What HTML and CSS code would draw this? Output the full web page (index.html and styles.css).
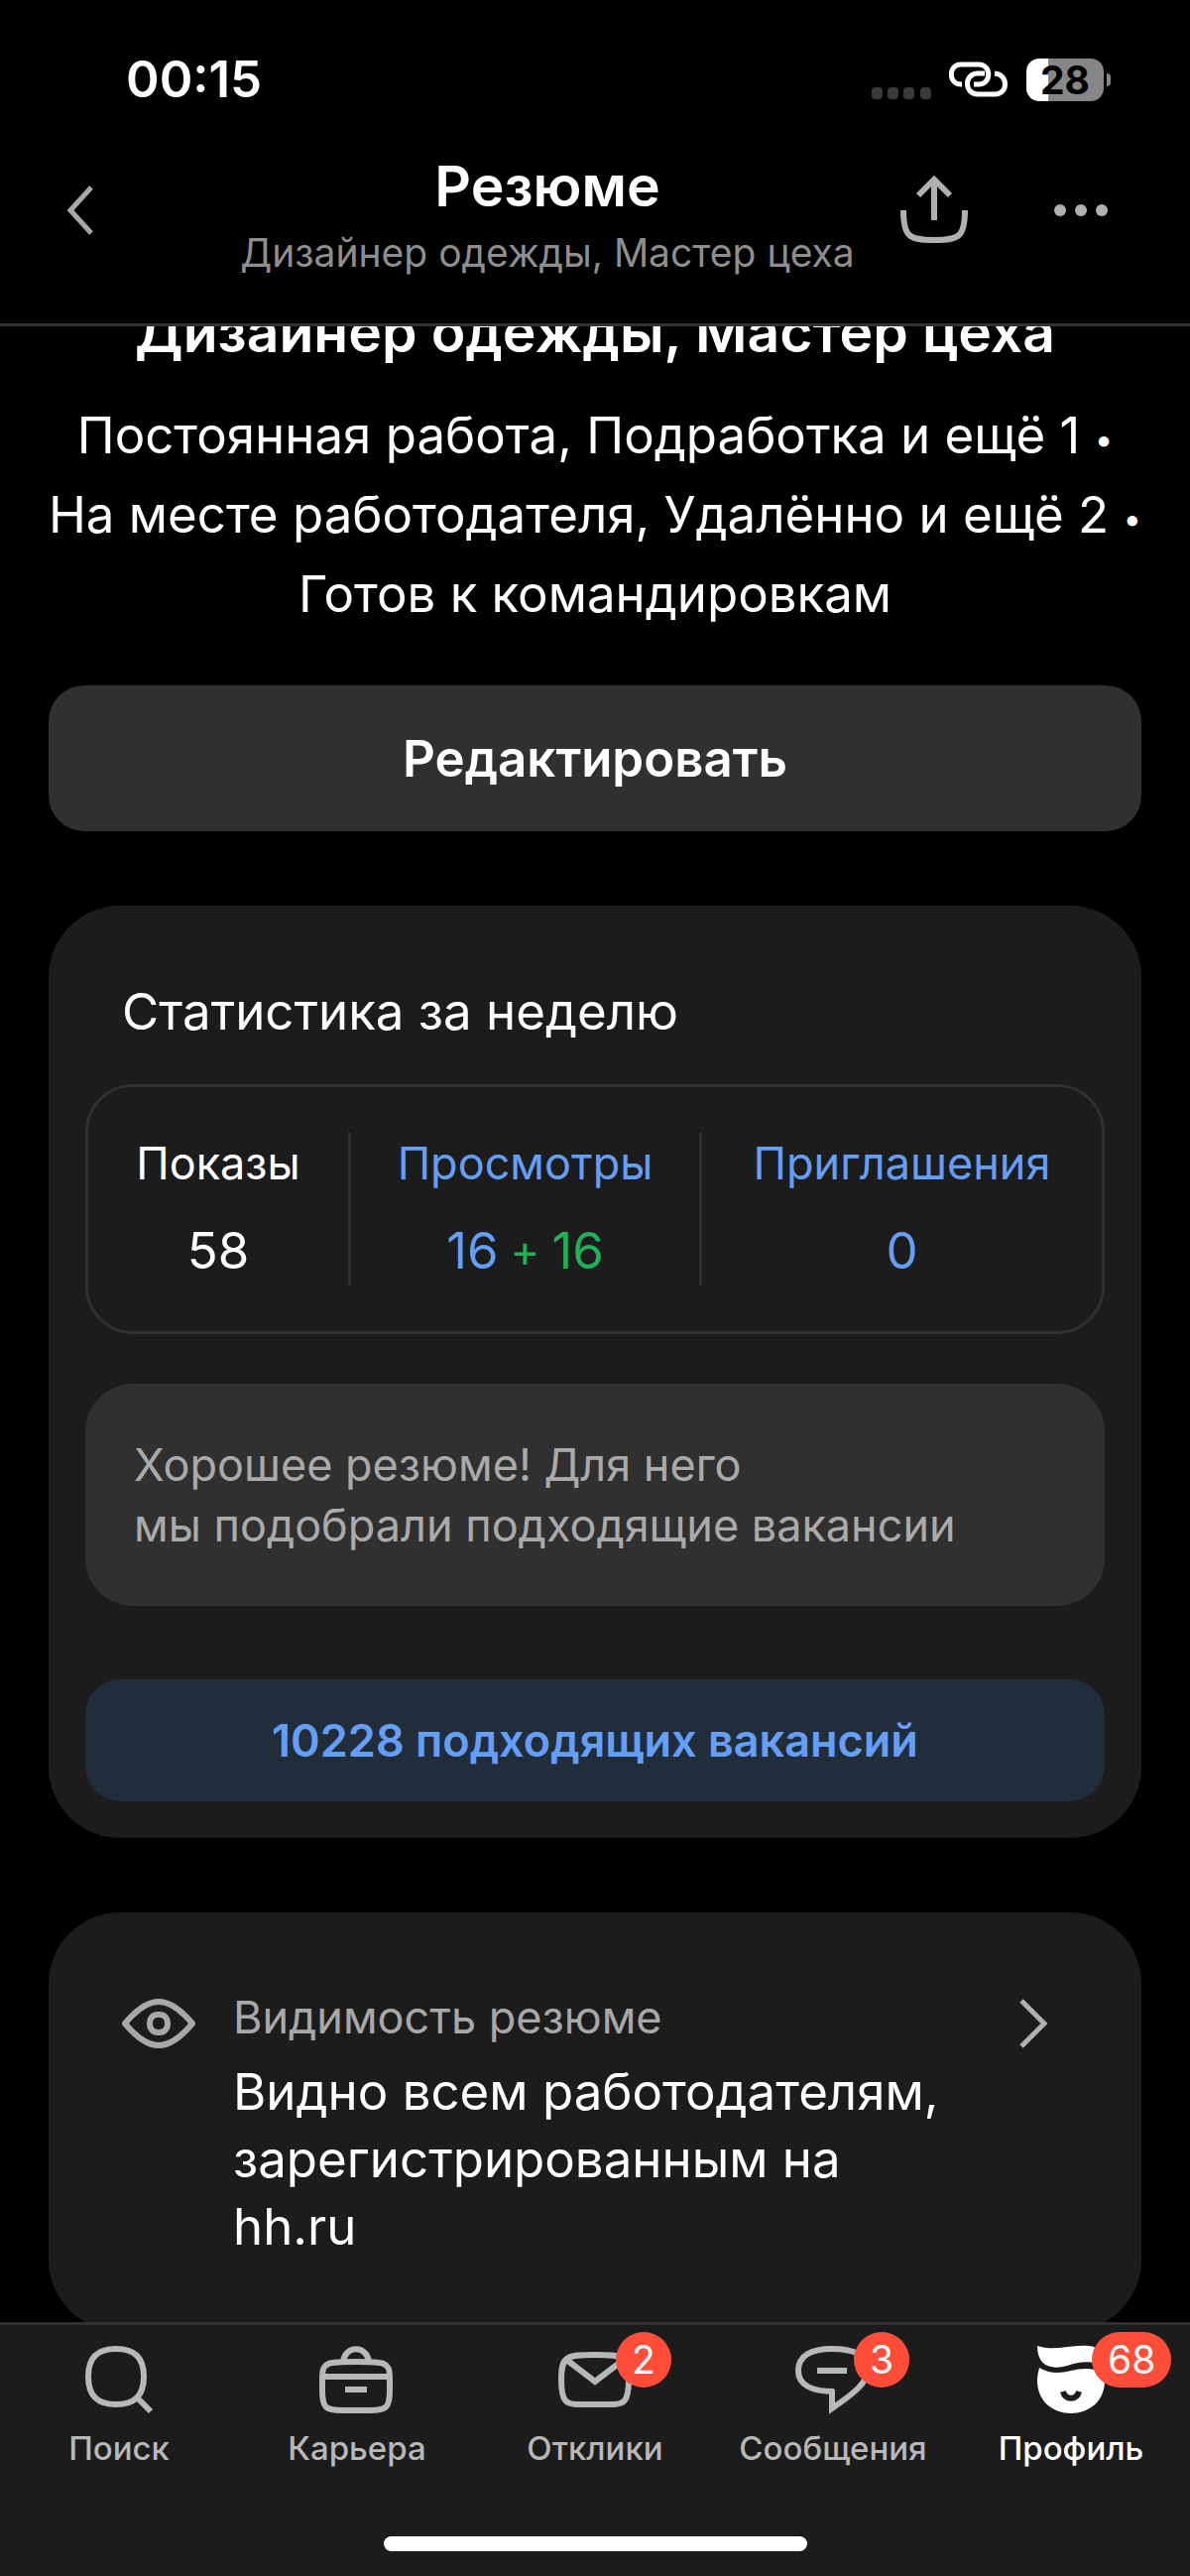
FILE: index.html
```html
<!DOCTYPE html>
<html lang="ru">
<head>
  <meta charset="UTF-8">
  <meta name="viewport" content="width=device-width, initial-scale=1">
  <title>Резюме</title>
  <link rel="stylesheet" href="styles.css">
</head>
<body>

<header class="header">
  <div class="status-bar">
    <span class="time">00:15</span>
    <div class="status-icons">
      <svg class="signal" width="60" height="12" viewBox="0 0 60 12" fill="#3a3a3a">
        <rect x="0" y="0" width="11" height="12" rx="4"/>
        <rect x="16" y="0" width="11" height="12" rx="4"/>
        <rect x="32" y="0" width="11" height="12" rx="4"/>
        <rect x="49" y="0" width="11" height="12" rx="4"/>
      </svg>
      <svg width="60" height="38" viewBox="0 0 60 38" fill="none" stroke="#fff" stroke-width="5">
        <path d="M13 24H12C-1 24-1 4 12 4H30C43 4 43 24 30 24H25"/>
        <path d="M36 13H29C15 13 15 34 29 34H46C60 34 60 14 46 13"/>
      </svg>
      <div class="battery"><span>28</span></div>
    </div>
  </div>
  <nav class="nav">
    <button class="icon-button back" aria-label="Назад">
      <svg width="28" height="52" viewBox="0 0 28 52" fill="none" stroke="#a8a8a8" stroke-width="5">
        <path d="M25 3L4 26L25 49"/>
      </svg>
    </button>
    <div class="nav-text">
      <h1>Резюме</h1>
      <p>Дизайнер одежды, Мастер цеха</p>
    </div>
    <div class="nav-actions">
      <button class="icon-button" aria-label="Поделиться">
        <svg width="72" height="72" viewBox="0 0 72 72" fill="none" stroke="#b0b0b0" stroke-width="6">
          <path d="M36 6V46M20 21L36 5L52 21"/>
          <path d="M5 36C5 62 10 66 36 66S67 62 67 36"/>
        </svg>
      </button>
      <button class="icon-button" aria-label="Ещё">
        <svg width="56" height="14" viewBox="0 0 56 14" fill="#b0b0b0">
          <circle cx="7" cy="7" r="6"/>
          <circle cx="28" cy="7" r="6"/>
          <circle cx="49" cy="7" r="6"/>
        </svg>
      </button>
    </div>
  </nav>
</header>

<main class="content">
  <div class="scroll">
    <h2 class="resume-title">Дизайнер одежды, Мастер цеха</h2>
    <p class="resume-info">Постоянная работа, Подработка и ещё 1 <span class="dot">•</span><br>На месте работодателя, Удалённо и ещё 2 <span class="dot">•</span><br>Готов к командировкам</p>
    <button class="edit-button">Редактировать</button>

    <section class="card">
      <h3>Статистика за неделю</h3>
      <div class="stats">
        <div class="stat">
          <span class="stat-label">Показы</span>
          <span class="stat-value">58</span>
        </div>
        <a class="stat" href="#">
          <span class="stat-label">Просмотры</span>
          <span class="stat-value">16<span class="plus">+</span><span class="new">16</span></span>
        </a>
        <a class="stat" href="#">
          <span class="stat-label">Приглашения</span>
          <span class="stat-value">0</span>
        </a>
      </div>
      <p class="notice">Хорошее резюме! Для него<br>мы подобрали подходящие вакансии</p>
      <button class="vacancies-button">10228 подходящих вакансий</button>
    </section>

    <a class="card visibility" href="#">
      <svg width="74" height="74" viewBox="0 0 74 74" fill="none" stroke="#a8a8a8" stroke-width="6">
        <path d="M3 37C13 25 24 15 37 15S61 25 71 37C61 49 50 59 37 59S13 49 3 37Z" stroke-linejoin="round"/>
        <rect x="28" y="28" width="18" height="18" rx="8"/>
      </svg>
      <div class="visibility-text">
        <p class="caption">Видимость резюме</p>
        <p class="value">Видно всем работодателям, зарегистрированным на hh.ru</p>
      </div>
      <svg width="74" height="74" viewBox="0 0 74 74" fill="none" stroke="#b0b0b0" stroke-width="5">
        <path d="M27 14L50 37L27 60"/>
      </svg>
    </a>
  </div>
</main>

<footer class="tab-bar">
  <nav class="tabs">
    <a class="tab" href="#">
      <span class="tab-icon">
        <svg width="80" height="80" viewBox="0 0 80 80" fill="none" stroke="#b8b8b8" stroke-width="6">
          <path d="M37 9C56 9 65 18 65 37S56 65 37 65S9 56 9 37S18 9 37 9Z"/>
          <path d="M57 57L72 72"/>
        </svg>
      </span>
      Поиск
    </a>
    <a class="tab" href="#">
      <span class="tab-icon">
        <svg width="80" height="80" viewBox="0 0 80 80" fill="none" stroke="#b8b8b8" stroke-width="6">
          <path d="M39 22C67 22 73 22 73 37V51C73 69 69 71 53 71H25C9 71 5 69 5 51V37C5 22 11 22 39 22Z"/>
          <path d="M26 22C28 5 50 5 52 22M5 37H73M28 50H50"/>
        </svg>
      </span>
      Карьера
    </a>
    <a class="tab" href="#">
      <span class="tab-icon">
        <svg width="80" height="80" viewBox="0 0 80 80" fill="none" stroke="#b8b8b8" stroke-width="6">
          <path d="M40 15C69 15 74 16 74 40S68 65 56 65H24C12 65 6 64 6 40S11 15 40 15Z"/>
          <path d="M10 19L40 42L70 19"/>
        </svg>
        <span class="badge">2</span>
      </span>
      Отклики
    </a>
    <a class="tab" href="#">
      <span class="tab-icon">
        <svg width="80" height="80" viewBox="0 0 80 80" fill="none" stroke="#b8b8b8" stroke-width="6">
          <path d="M41 52C18 52 5 45 5 31C5 16 18 9 39 9S75 15 75 30C75 43 61 54 39 69V50"/>
          <path d="M24 31H54"/>
        </svg>
        <span class="badge">3</span>
      </span>
      Сообщения
    </a>
    <a class="tab active" href="#">
      <span class="tab-icon">
        <svg width="80" height="80" viewBox="0 0 80 80" fill="#fff">
          <path d="M6 6C24 12 40 4 58 6C68 7 73 13 74 26C60 20 48 22 36 26C18 31 6 25 6 6Z"/>
          <path d="M8 28C18 34 28 34 40 31C52 28 62 28 73 33C74 36 74 38 74 41C74 62 58 74 40 74S6 62 6 41C6 36 7 32 8 28Z"/>
          <path d="M32 52C34 61 46 61 48 52" fill="none" stroke="#1c1c1c" stroke-width="6"/>
        </svg>
        <span class="badge">68</span>
      </span>
      Профиль
    </a>
  </nav>
  <div class="home-indicator"></div>
</footer>

</body>
</html>
```
FILE: styles.css
```css
* {
  box-sizing: border-box;
  margin: 0;
  padding: 0;
}
body {
  display: flex;
  flex-direction: column;
  height: 100vh;
  background: #000;
  color: #fff;
  font-family: Inter, "Liberation Sans", sans-serif;
  font-size: 51px;
}
a {
  color: inherit;
  text-decoration: none;
}
button {
  border: none;
  font-family: inherit;
  cursor: pointer;
}
svg {
  display: block;
  flex-shrink: 0;
}

/* Header */
.header {
  flex-shrink: 0;
  border-bottom: 3px solid #303030;
}
.status-bar {
  display: flex;
  justify-content: space-between;
  padding: 50px 80px 0 127px;
}
.time {
  font-weight: 600;
  line-height: 60px;
}
.status-icons {
  display: flex;
  align-items: center;
  gap: 18px;
}
.signal {
  align-self: flex-end;
  margin-bottom: 10px;
}
.battery {
  position: relative;
  width: 78px;
  height: 43px;
  margin-right: 7px;
  border-radius: 13px;
  background: linear-gradient(to right, #fff 28%, #868686 28%);
  color: #000;
  font-size: 39px;
  font-weight: 700;
  line-height: 43px;
  text-align: center;
}
.battery::after {
  content: "";
  position: absolute;
  top: 15px;
  right: -7px;
  width: 4px;
  height: 13px;
  border-radius: 0 4px 4px 0;
  background: #868686;
}
.nav {
  display: grid;
  grid-template-columns: 230px 1fr 326px;
  align-items: start;
  padding: 42px 0 43px;
}
.nav-text {
  text-align: center;
  white-space: nowrap;
}
.nav-text h1 {
  font-size: 57px;
  font-weight: 600;
  line-height: 72px;
}
.nav-text p {
  margin-top: 3px;
  color: #8e8e8e;
  font-size: 39px;
  line-height: 56px;
}
.icon-button {
  display: flex;
  align-items: center;
  height: 120px;
  background: none;
}
.back {
  padding-left: 67px;
}
.nav-actions {
  display: flex;
  justify-content: space-between;
  padding: 0 82px 0 32px;
}

/* Resume */
.content {
  flex: 1;
  min-height: 0;
  overflow: hidden;
}
.scroll {
  margin-top: -30px;
  padding: 0 49px;
}
.resume-title {
  font-size: 57px;
  font-weight: 600;
  line-height: 72px;
  text-align: center;
  white-space: nowrap;
}
.resume-info {
  margin: 28px -20px 52px;
  line-height: 80px;
  text-align: center;
}
.dot {
  font-size: 33px;
  line-height: 1;
  vertical-align: middle;
}
.edit-button {
  display: block;
  width: 100%;
  height: 147px;
  border-radius: 36px;
  background: #303030;
  color: #fff;
  font-size: 51px;
  font-weight: 600;
}
.card {
  display: block;
  margin-top: 75px;
  padding: 73px 37px 37px;
  border-radius: 72px;
  background: #1c1c1c;
}
.card h3 {
  padding: 0 37px;
  font-size: 51px;
  font-weight: 400;
  line-height: 68px;
}
.stats {
  display: grid;
  grid-template-columns: 262fr 354fr 406fr;
  margin-top: 39px;
  padding: 46px 0;
  border: 3px solid #303030;
  border-radius: 48px;
}
.stat {
  text-align: center;
}
.stat + .stat {
  border-left: 3px solid #303030;
  color: #659ff5;
}
.stat-label {
  display: block;
  font-size: 45px;
  line-height: 62px;
}
.stat-value {
  display: flex;
  justify-content: center;
  gap: 12px;
  margin-top: 22px;
  line-height: 70px;
}
.plus,
.new {
  color: #1fb25a;
}
.plus {
  font-size: 45px;
}
.notice {
  margin-top: 50px;
  padding: 51px 49px;
  border-radius: 48px;
  background: #303030;
  color: #aaa;
  font-size: 45px;
  line-height: 61px;
}
.vacancies-button {
  display: block;
  width: 100%;
  height: 123px;
  margin-top: 74px;
  border-radius: 36px;
  background: #222d3c;
  color: #659ff5;
  font-size: 45px;
  font-weight: 600;
}
.visibility {
  display: flex;
  gap: 38px;
  padding: 75px 74px 71px;
}
.visibility-text {
  flex: 1;
}
.caption {
  color: #a8a8a8;
  font-size: 45px;
  line-height: 62px;
}
.value {
  margin-top: 10px;
  line-height: 68px;
}

/* Bottom tabs */
.tab-bar {
  flex-shrink: 0;
  padding: 15px 0 25px;
  border-top: 3px solid #303030;
  background: #1c1c1c;
}
.tabs {
  display: flex;
}
.tab {
  display: flex;
  flex: 1;
  flex-direction: column;
  align-items: center;
  gap: 9px;
  color: #b8b8b8;
  font-size: 33px;
  font-weight: 500;
  line-height: 40px;
}
.tab.active {
  color: #fff;
}
.tab-icon {
  position: relative;
}
.badge {
  position: absolute;
  top: -8px;
  left: 61px;
  min-width: 56px;
  padding: 0 16px;
  border-radius: 28px;
  background: #ff4d3a;
  color: #fff;
  font-size: 39px;
  font-weight: 400;
  line-height: 56px;
  text-align: center;
}
.home-indicator {
  width: 36%;
  max-width: 427px;
  height: 15px;
  margin: 69px auto 0;
  border-radius: 8px;
  background: #fff;
}
```
